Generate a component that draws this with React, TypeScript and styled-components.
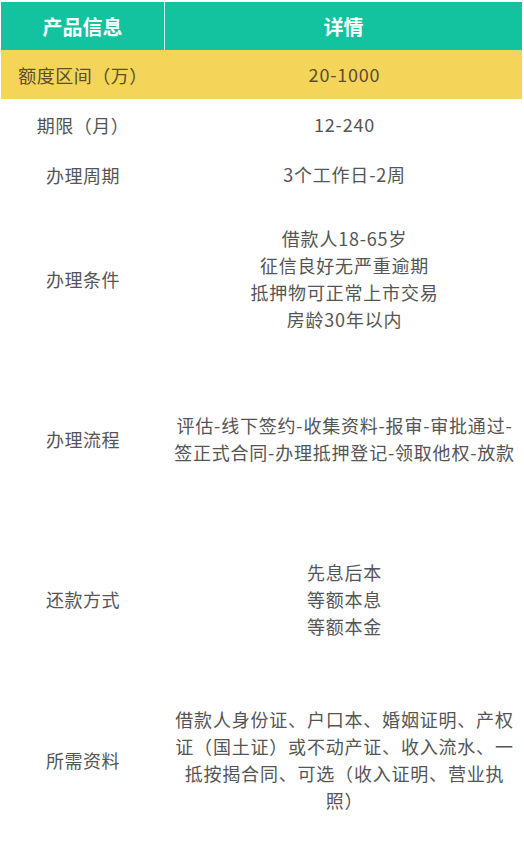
import React from "react"
import styled, { createGlobalStyle } from "styled-components"

const GlobalStyle = createGlobalStyle`
  html, body {
    margin: 0;
    padding: 0;
    background: #ffffff;
  }
  body {
    font-family: "Noto Sans CJK SC", "Noto Sans", sans-serif;
  }
`

const Table = styled.div`
  width: 524px;
  padding: 2px 2px 0 1px;
  box-sizing: border-box;
  background: #fff;
`

const Row = styled.div<{ $h: number; $bg?: string; $color?: string }>`
  display: grid;
  grid-template-columns: 164px 1fr;
  height: ${p => p.$h}px;
  background: ${p => p.$bg || "transparent"};
  color: ${p => p.$color || "#555555"};
`

const HeadCell = styled.div<{ $divider?: boolean }>`
  display: flex;
  align-items: center;
  justify-content: center;
  font-size: 20px;
  font-weight: 700;
  color: #ffffff;
  border-right: ${p => (p.$divider ? "1px solid #d8f3ec" : "none")};
`

const Label = styled.div`
  display: flex;
  align-items: center;
  justify-content: center;
  font-size: 18px;
  letter-spacing: 0.5px;
`

const Value = styled.div`
  display: flex;
  align-items: center;
  justify-content: center;
  text-align: center;
  font-size: 18px;
  line-height: 27px;
  letter-spacing: 0.8px;
  padding: 0 4px 0 6px;
`

type Item = { label: string; lines: string[]; h: number }

const rows: Item[] = [
  { label: "期限（月）", lines: ["12-240"], h: 51 },
  { label: "办理周期", lines: ["3个工作日-2周"], h: 49 },
  {
    label: "办理条件",
    lines: ["借款人18-65岁", "征信良好无严重逾期", "抵押物可正常上市交易", "房龄30年以内"],
    h: 160,
  },
  {
    label: "办理流程",
    lines: ["评估-线下签约-收集资料-报审-审批通过-", "签正式合同-办理抵押登记-领取他权-放款"],
    h: 160,
  },
  { label: "还款方式", lines: ["先息后本", "等额本息", "等额本金"], h: 160 },
  {
    label: "所需资料",
    lines: [
      "借款人身份证、户口本、婚姻证明、产权",
      "证（国土证）或不动产证、收入流水、一",
      "抵按揭合同、可选（收入证明、营业执",
      "照）",
    ],
    h: 162,
  },
]

const App: React.FC = () => {
  return (
    <>
      <GlobalStyle />
      <Table>
        <Row $h={48} $bg="#13c29f">
          <HeadCell $divider>产品信息</HeadCell>
          <HeadCell>详情</HeadCell>
        </Row>
        <Row $h={49} $bg="#f4d459" $color="#5b4d2e">
          <Label>额度区间（万）</Label>
          <Value>20-1000</Value>
        </Row>
        {rows.map(r => (
          <Row key={r.label} $h={r.h}>
            <Label>{r.label}</Label>
            <Value>
              <div>
                {r.lines.map((l, i) => (
                  <div key={i}>{l}</div>
                ))}
              </div>
            </Value>
          </Row>
        ))}
      </Table>
    </>
  )
}

export default App
